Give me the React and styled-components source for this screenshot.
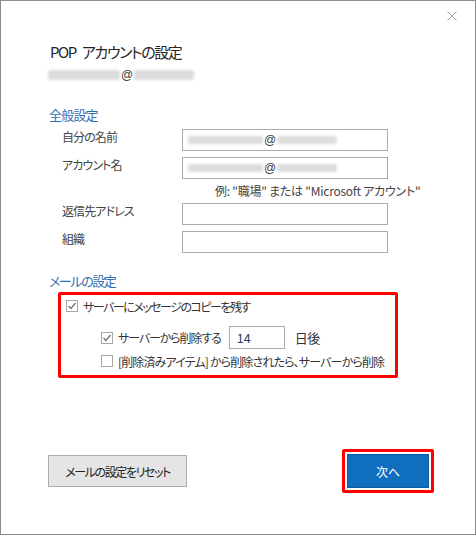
import React from "react";
import styled, { createGlobalStyle } from "styled-components";

const Global = createGlobalStyle`
  html, body { margin: 0; padding: 0; background: #fff; }
  body {
    font-family: "Noto Sans CJK JP", "Noto Sans", sans-serif;
    font-feature-settings: "palt";
    -webkit-font-smoothing: antialiased;
  }
  * { box-sizing: border-box; }
`;

const Dialog = styled.div`
  width: 476px;
  height: 535px;
  border: 1px solid #8c8c8c;
  background: #fff;
  display: flex;
  flex-direction: column;
  padding: 0 0 41px 47px;
  color: #333;
`;

const CloseRow = styled.div`
  display: flex;
  justify-content: flex-end;
  padding: 10px 18px 0 0;
  height: 20px;
`;

const CloseBtn = styled.button`
  border: 0;
  background: none;
  padding: 0;
  width: 10px;
  height: 10px;
  display: block;
  cursor: pointer;
  svg { display: block; }
`;

const Title = styled.h1`
  margin: 21px 0 0 2px;
  font-size: 15px;
  line-height: 20px;
  letter-spacing: -1.4px;
  font-weight: 400;
  color: #262626;
`;

const Gap = styled.span`
  display: inline-block;
  width: 4px;
`;

const EmailRow = styled.div`
  margin-top: 3px;
  height: 20px;
  display: flex;
  align-items: center;
  font-size: 12px;
  color: #444;
`;

const Blur = styled.span`
  display: inline-block;
  width: ${(p) => p.$w}px;
  height: ${(p) => p.$h || 10}px;
  background: #dcdcdc;
  filter: blur(1.5px);
  border-radius: 2px;
`;

const At = styled.span`
  padding: 0 1px;
  font-family: "Liberation Sans", sans-serif;
  font-size: 12px;
  color: #3a3a3a;
`;

const SectionHead = styled.h2`
  margin: ${(p) => p.$mt}px 0 0 1px;
  font-size: 13px;
  line-height: 16px;
  letter-spacing: ${(p) => p.$ls}px;
  font-weight: 400;
  color: #2f6db5;
`;

const FormGrid = styled.div`
  margin-top: 6px;
  padding-left: 14px;
  display: grid;
  grid-template-columns: 120px 206px;
  row-gap: 6px;
`;

const Label = styled.div`
  font-size: 12px;
  line-height: 16px;
  letter-spacing: -0.9px;
  color: #444;
`;

const Field = styled.div`
  height: 22px;
  border: 1px solid #ababab;
  background: #fff;
  display: flex;
  align-items: center;
  padding-left: 5px;
`;

const Hint = styled.div`
  grid-column: 2;
  padding-left: 33px;
  font-size: 12px;
  line-height: 12px;
  letter-spacing: -0.25px;
  color: #444;
  white-space: nowrap;
`;

const MailBox = styled.div`
  margin: 3px 0 0 10px;
  width: 340px;
  border: 3px solid #ff0000;
  border-radius: 2px;
  padding: 1px 6px 4px 5px;
  display: flex;
  flex-direction: column;
`;

const OptRow = styled.div`
  display: flex;
  align-items: center;
  height: ${(p) => p.$h}px;
  margin-top: ${(p) => p.$mt || 0}px;
  padding-left: ${(p) => p.$indent || 0}px;
  font-size: 12px;
  color: #333;
  white-space: nowrap;
`;

const OptText = styled.span`
  letter-spacing: ${(p) => p.$ls}px;
`;

const Box = styled.span`
  width: 12px;
  height: 12px;
  border: 1px solid #a6a6a6;
  background: #fff;
  flex: none;
  display: flex;
  align-items: center;
  justify-content: center;
  margin-right: 5px;
  svg { display: block; }
`;

const DaysInput = styled.div`
  width: 56px;
  height: 23px;
  border: 1px solid #ababab;
  margin-left: 8px;
  padding-left: 7px;
  display: flex;
  align-items: center;
  font-size: 12.5px;
  color: #1f3f66;
`;

const Suffix = styled.span`
  margin-left: 10px;
  font-size: 13px;
  letter-spacing: -0.5px;
  color: #333;
`;

const Footer = styled.div`
  margin-top: auto;
  display: flex;
  align-items: center;
  justify-content: space-between;
  padding-right: 41px;
`;

const ResetButton = styled.button`
  width: 139px;
  height: 32px;
  border: 1px solid #adadad;
  background: #e5e5e5;
  color: #222;
  font-family: inherit;
  font-feature-settings: "palt";
  font-size: 12px;
  letter-spacing: -1.4px;
  padding: 0;
`;

const Highlight = styled.div`
  border: 3px solid #ff0000;
  border-radius: 2px;
  padding: 2px;
  background: #fff;
`;

const PrimaryButton = styled.button`
  display: block;
  width: 82px;
  height: 34px;
  border: 1px solid #0b5a9e;
  background: #106ebe;
  color: #fff;
  font-family: inherit;
  font-size: 12px;
  padding: 0;
`;

function Check({ checked }) {
  return (
    <Box>
      {checked && (
        <svg width="10" height="10" viewBox="0 0 10 10">
          <polyline points="1.5,5 4,7.5 8.5,2" fill="none" stroke="#707070" strokeWidth="1.2" />
        </svg>
      )}
    </Box>
  );
}

function Email({ small }) {
  return (
    <>
      <Blur $w={small ? 75 : 72} $h={small ? 8 : 10} />
      <At>@</At>
      <Blur $w={60} $h={small ? 8 : 10} />
    </>
  );
}

export default function App() {
  return (
    <>
      <Global />
      <Dialog>
        <CloseRow>
          <CloseBtn aria-label="閉じる">
            <svg width="10" height="10" viewBox="0 0 10 10">
              <path d="M0.5 0.5 L9.5 9.5 M9.5 0.5 L0.5 9.5" stroke="#a0a0a0" strokeWidth="1" />
            </svg>
          </CloseBtn>
        </CloseRow>
        <Title>
          POP<Gap /> アカウントの設定
        </Title>
        <EmailRow>
          <Email />
        </EmailRow>

        <SectionHead $mt={22} $ls={-0.8}>全般設定</SectionHead>
        <FormGrid>
          <Label>自分の名前</Label>
          <Field>
            <Email small />
          </Field>
          <Label>アカウント名</Label>
          <Field>
            <Email small />
          </Field>
          <Hint>例: "職場" または "Microsoft アカウント"</Hint>
          <Label>返信先アドレス</Label>
          <Field />
          <Label>組織</Label>
          <Field />
        </FormGrid>

        <SectionHead $mt={20} $ls={-1.4}>メールの設定</SectionHead>
        <MailBox>
          <OptRow $h={20}>
            <Check checked />
            <OptText $ls={-1.5}>サーバーにメッセージのコピーを残す</OptText>
          </OptRow>
          <OptRow $h={23} $mt={10} $indent={35}>
            <Check checked />
            <OptText $ls={-1.1}>サーバーから削除する</OptText>
            <DaysInput>14</DaysInput>
            <Suffix>日後</Suffix>
          </OptRow>
          <OptRow $h={20} $mt={2} $indent={35}>
            <Check />
            <OptText $ls={-0.85}>[削除済みアイテム] から削除されたら、サーバーから削除</OptText>
          </OptRow>
        </MailBox>

        <Footer>
          <ResetButton>メールの設定をリセット</ResetButton>
          <Highlight>
            <PrimaryButton>次へ</PrimaryButton>
          </Highlight>
        </Footer>
      </Dialog>
    </>
  );
}
